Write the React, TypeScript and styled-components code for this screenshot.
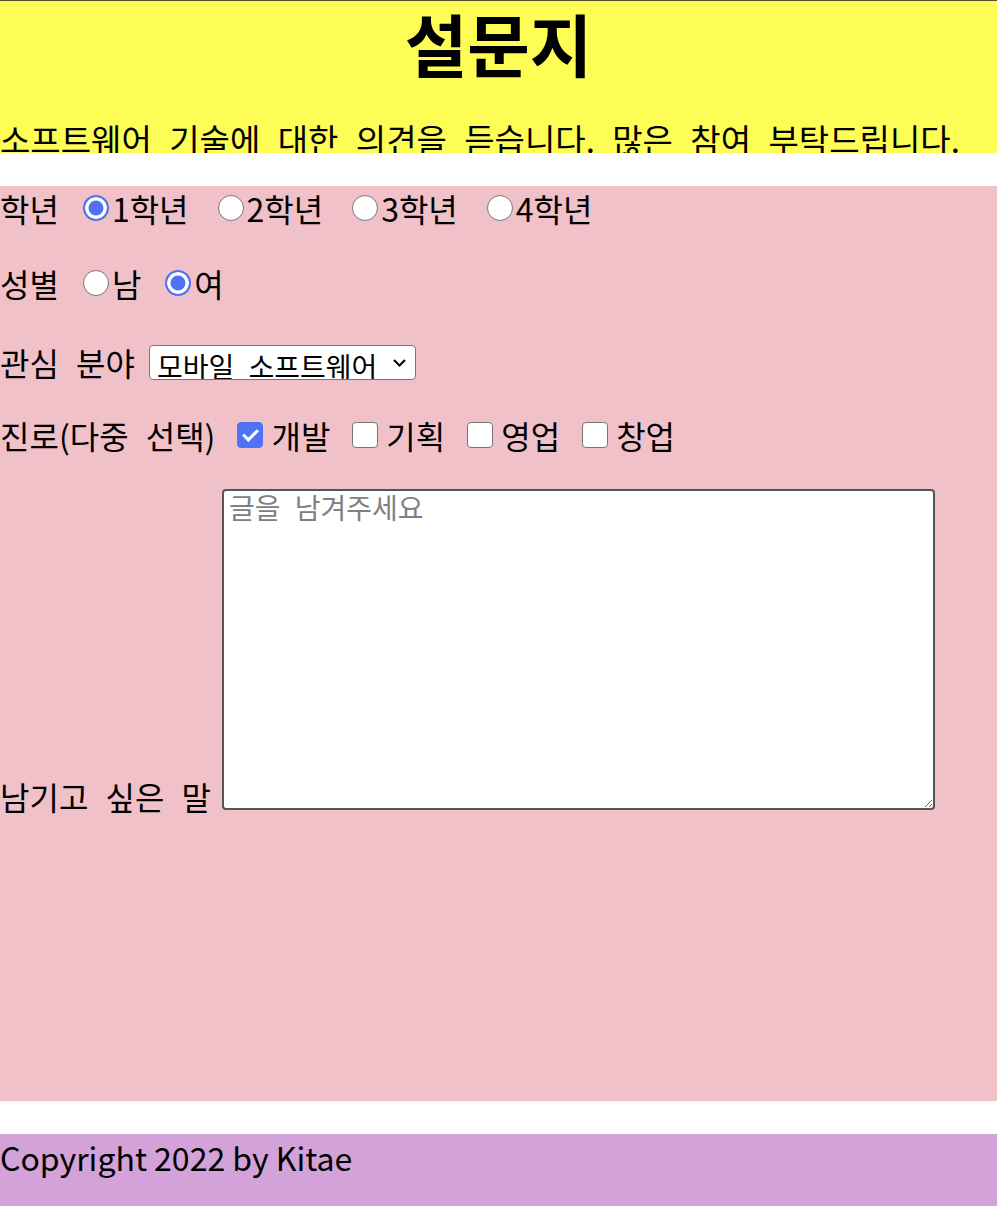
import React from "react";
import styled, { createGlobalStyle } from "styled-components";

const GlobalStyle = createGlobalStyle`
  html, body { margin: 0; padding: 0; background: #ffffff; }
  body {
    font-family: "Noto Sans CJK KR", "Noto Sans", sans-serif;
    color: #000;
  }
  * { box-sizing: border-box; }
`;

const ACCENT = "#4f72f5";

const Page = styled.div`
  width: 997px;
  display: flex;
  flex-direction: column;
`;

const Header = styled.header`
  height: 153px;
  border-top: 1px solid #50502a;
  background: #fdfd55;
  overflow: hidden;
  display: flex;
  flex-direction: column;
`;

const Title = styled.h1`
  margin: 0;
  font-size: 68px;
  font-weight: 700;
  line-height: 84px;
  text-align: center;
`;

const Subtitle = styled.p`
  margin: 30px 0 0;
  font-size: 33px;
  white-space: nowrap;
  word-spacing: 10px;
`;

const Survey = styled.section`
  margin-top: 33px;
  height: 915px;
  background: #f0c1c9;
  display: flex;
  flex-direction: column;
`;

const Row = styled.div<{ $mt?: number }>`
  display: flex;
  align-items: center;
  height: 44px;
  margin-top: ${(p) => p.$mt ?? 0}px;
  font-size: 32px;
  word-spacing: 10px;
  white-space: nowrap;
`;

const Label = styled.span<{ $gap?: number }>`
  margin-right: ${(p) => p.$gap ?? 24}px;
`;

const Choice = styled.label<{ $gap?: number; $inner?: number }>`
  display: inline-flex;
  align-items: center;
  gap: ${(p) => p.$inner ?? 3}px;
  margin-right: ${(p) => p.$gap ?? 29}px;
`;

const Radio = styled.input.attrs({ type: "radio" })`
  appearance: none;
  flex: none;
  width: 26px;
  height: 26px;
  margin: 0;
  border: 1.5px solid #767676;
  border-radius: 50%;
  background: #fff;
  &:checked {
    border: 2.5px solid ${ACCENT};
    background: ${ACCENT};
    box-shadow: inset 0 0 0 3.5px #fff;
  }
`;

const Check = styled.input.attrs({ type: "checkbox" })`
  appearance: none;
  flex: none;
  position: relative;
  width: 26px;
  height: 26px;
  margin: 0;
  border: 1.5px solid #767676;
  border-radius: 4px;
  background: #fff;
  &:checked {
    border-color: ${ACCENT};
    background: ${ACCENT};
  }
  &:checked::after {
    content: "";
    position: absolute;
    left: 7.5px;
    top: 3px;
    width: 6px;
    height: 12px;
    border-right: 3.5px solid #fff;
    border-bottom: 3.5px solid #fff;
    transform: rotate(45deg);
  }
`;

const SelectWrap = styled.span`
  position: relative;
  display: inline-flex;
`;

const Select = styled.select`
  appearance: none;
  width: 267px;
  height: 35px;
  margin: 0;
  padding: 0 30px 0 7px;
  border: 1.5px solid #767676;
  border-radius: 4px;
  background: #fff;
  font-family: "Noto Sans CJK KR", sans-serif;
  font-size: 28px;
  word-spacing: 8px;
  color: #000;
`;

const Chevron = styled.svg`
  position: absolute;
  right: 9px;
  top: 13px;
  pointer-events: none;
`;

const MemoRow = styled.div`
  margin-top: 32px;
  font-size: 32px;
  word-spacing: 10px;
  white-space: nowrap;
`;

const Memo = styled.textarea`
  width: 713px;
  height: 321px;
  margin: 0 0 0 11px;
  padding: 0 5px;
  vertical-align: baseline;
  border: 2px solid #555;
  border-radius: 4px;
  background: #fff;
  font-family: "Noto Sans CJK KR", sans-serif;
  font-size: 28px;
  line-height: 1.2;
  word-spacing: 8px;
  &::placeholder { color: #808080; }
`;

const Footer = styled.footer`
  margin-top: 33px;
  height: 72px;
  background: #d2a2d8;
  font-size: 32px;
  line-height: 46px;
  white-space: nowrap;
`;

export default function App() {
  return (
    <>
      <GlobalStyle />
      <Page>
        <Header>
          <Title>설문지</Title>
          <Subtitle>소프트웨어 기술에 대한 의견을 듣습니다. 많은 참여 부탁드립니다.</Subtitle>
        </Header>
        <Survey>
          <Row>
            <Label>학년</Label>
            <Choice><Radio name="grade" defaultChecked />1학년</Choice>
            <Choice><Radio name="grade" />2학년</Choice>
            <Choice><Radio name="grade" />3학년</Choice>
            <Choice><Radio name="grade" />4학년</Choice>
          </Row>
          <Row $mt={31}>
            <Label>성별</Label>
            <Choice $gap={24}><Radio name="sex" />남</Choice>
            <Choice $gap={24}><Radio name="sex" defaultChecked />여</Choice>
          </Row>
          <Row $mt={35}>
            <Label $gap={14}>관심 분야</Label>
            <SelectWrap>
              <Select defaultValue="mobile">
                <option value="mobile">모바일 소프트웨어</option>
                <option value="web">웹 프로그래밍</option>
                <option value="ai">인공지능</option>
              </Select>
              <Chevron width="15" height="10" viewBox="0 0 15 10">
                <path d="M2 2 L7.5 7.5 L13 2" fill="none" stroke="#000" strokeWidth="2" />
              </Chevron>
            </SelectWrap>
          </Row>
          <Row $mt={29}>
            <Label $gap={22}>진로(다중 선택)</Label>
            <Choice $inner={8} $gap={22}><Check defaultChecked />개발</Choice>
            <Choice $inner={8} $gap={22}><Check />기획</Choice>
            <Choice $inner={8} $gap={22}><Check />영업</Choice>
            <Choice $inner={8} $gap={22}><Check />창업</Choice>
          </Row>
          <MemoRow>
            남기고 싶은 말<Memo placeholder="글을 남겨주세요" />
          </MemoRow>
        </Survey>
        <Footer>Copyright 2022 by Kitae</Footer>
      </Page>
    </>
  );
}
